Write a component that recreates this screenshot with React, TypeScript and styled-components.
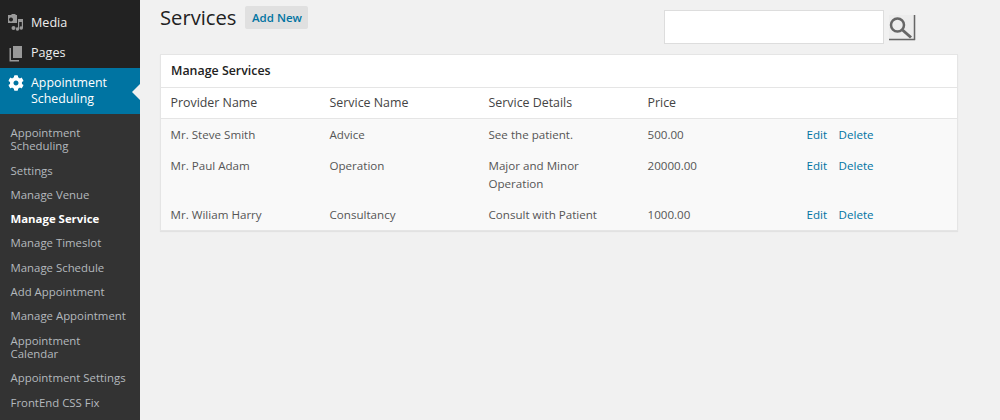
import React from "react";
import styled, { createGlobalStyle } from "styled-components";
import { FaCog } from "react-icons/fa";

const Global = createGlobalStyle`
  html, body { margin: 0; padding: 0; background: #f1f1f1; overflow: hidden; }
  body { font-family: "Open Sans", "Liberation Sans", sans-serif; }
  * { box-sizing: border-box; }
`;
const Page = styled.div`display: flex; width: 1000px; height: 420px; overflow: hidden; background: #f1f1f1;`;
const Sidebar = styled.nav`width: 140px; height: 420px; flex: none; background: #333; display: flex; flex-direction: column; overflow: hidden;`;
const TopMenu = styled.div`flex: none; background: #222; padding-top: 7px; display: flex; flex-direction: column;`;
const MenuItem = styled.div<{ $h: number }>`
  height: ${p => p.$h}px; display: flex; align-items: center; gap: 7px; padding-left: 7px;
  color: #eee; font-size: 12.6px; line-height: 18px;
`;
const IconBox = styled.span`width: 17px; height: 17px; flex: none; display: flex; align-items: center; justify-content: center; color: #999;`;
const Current = styled.div`
  flex: none; position: relative; height: 46px; background: #0074a2; color: #fff; display: flex; align-items: center; gap: 7px;
  padding-left: 7px; font-size: 12.4px; line-height: 16px;
  &::after {
    content: ""; position: absolute; right: 0; top: 16px; border: 8px solid transparent; border-right-color: #f1f1f1; border-left-width: 0;
  }
`;
const WhiteIcon = styled(IconBox)`color: #fff; align-self: flex-start; margin-top: 6px;`;
const Sub = styled.div`display: flex; flex-direction: column; padding: 12px 11px 0 10.5px;`;
const SubItem = styled.a<{ $active?: boolean }>`
  display: block; color: ${p => (p.$active ? "#fff" : "#b4b9be")}; font-weight: ${p => (p.$active ? 700 : 400)};
  font-size: 11.4px; line-height: 13.3px; margin-bottom: 11px;
`;
const Main = styled.main`flex: 1; padding: 0 42px 0 20px; min-width: 0;`;
const TitleRow = styled.div`display: flex; height: 54px; position: relative;`;
const Title = styled.h1`margin: 0; font-weight: 400; font-size: 20.2px; line-height: 34px; color: #222;`;
const AddNew = styled.a`
  margin: 6px 0 0 9px; height: 23px; width: 63px; display: flex; align-items: center; justify-content: center;
  background: #e0e0e0; color: #0074a2; font-weight: 600; font-size: 11.5px; border-radius: 2px;
`;
const Search = styled.div`margin-left: auto; margin-right: 42px; display: flex; gap: 5px; padding-top: 10px;`;
const SearchInput = styled.input`width: 220px; height: 34px; background: #fff; border: 1px solid #ddd; outline: none;`;
const SearchBtn = styled.button`width: 27px; height: 26px; margin-top: 5px; padding: 0; border: none; background: #ececec; display: block;`;
const Card = styled.section`background: #fff; border: 1px solid #e5e5e5; box-shadow: 0 1px 1px rgba(0,0,0,.06);`;
const CardTitle = styled.h3`margin: 0; height: 32px; padding: 0 10px; font-size: 12.4px; line-height: 32px; font-weight: 600; color: #222;`;
const Table = styled.table`width: 100%; border-collapse: collapse; table-layout: fixed; font-size: 11.6px; border-top: 1px solid #e5e5e5;`;
const Th = styled.th`
  text-align: left; font-weight: 400; font-size: 12.4px; color: #444; padding: 0 9.5px 2px; height: 31px; border-bottom: 1px solid #e5e5e5;
`;
const Td = styled.td`padding: 7px 9.5px 6px; line-height: 18px; color: #555; vertical-align: top; background: #f9f9f9;`;
const Actions = styled.div`display: flex; gap: 11.5px;`;
const Link = styled.a`color: #0074a2;`;

const rows = [
  ["Mr. Steve Smith", "Advice", "See the patient.", "500.00"],
  ["Mr. Paul Adam", "Operation", "Major and Minor Operation", "20000.00"],
  ["Mr. Wiliam Harry", "Consultancy", "Consult with Patient", "1000.00"],
];
const subs = ["Appointment Scheduling","Settings","Manage Venue","Manage Service","Manage Timeslot","Manage Schedule","Add Appointment","Manage Appointment","Appointment Calendar","Appointment Settings","FrontEnd CSS Fix"];

export default function App() {
  return (
    <Page>
      <Global />
      <Sidebar>
        <TopMenu>
          <MenuItem $h={31}>
            <IconBox>
              <svg width="17" height="17" viewBox="0 0 17 17" fill="#999">
                <path d="M1 1h3l1-1h3l1 1h1v8H1z M4 3.5a2 2 0 1 0 .01 0z" fillRule="evenodd" />
                <path d="M11 5h5v9a1.7 1.7 0 1 1-1.2-1.6V8h-2.6v7a1.7 1.7 0 1 1-1.2-1.6z" />
                <circle cx="6.5" cy="14" r="2" />
              </svg>
            </IconBox>
            Media
          </MenuItem>
          <MenuItem $h={30}>
            <IconBox>
              <svg width="17" height="17" viewBox="0 0 17 17" fill="#999">
                <path d="M6 1h9v12h-9z" />
                <path d="M4 3v12h8v1.5H2.5V3z" />
              </svg>
            </IconBox>
            Pages
          </MenuItem>
        </TopMenu>
        <Current>
          <WhiteIcon><FaCog size={16} /></WhiteIcon>
          <span>Appointment<br />Scheduling</span>
        </Current>
        <Sub>
          {subs.map(s => <SubItem key={s} $active={s === "Manage Service"}>{s}</SubItem>)}
        </Sub>
      </Sidebar>
      <Main>
        <TitleRow>
          <Title>Services</Title>
          <AddNew>Add New</AddNew>
          <Search>
            <SearchInput aria-label="Search" />
            <SearchBtn aria-label="Search">
              <svg width="27" height="26" viewBox="0 0 27 26" fill="none" stroke="#666">
                <circle cx="8.5" cy="10" r="6.5" strokeWidth="2.5" />
                <path d="M13.5 15l8.5 7.5" strokeWidth="3" />
                <path d="M0 24.5h26M25.5 0v25" strokeWidth="1.5" />
              </svg>
            </SearchBtn>
          </Search>
        </TitleRow>
        <Card>
          <CardTitle>Manage Services</CardTitle>
          <Table>
            <thead>
              <tr>
                <Th style={{ width: 159 }}>Provider Name</Th>
                <Th style={{ width: 159 }}>Service Name</Th>
                <Th style={{ width: 159 }}>Service Details</Th>
                <Th style={{ width: 159 }}>Price</Th>
                <Th />
              </tr>
            </thead>
            <tbody>
              {rows.map(r => (
                <tr key={r[0]}>
                  {r.map(c => <Td key={c}>{c}</Td>)}
                  <Td><Actions><Link>Edit</Link><Link>Delete</Link></Actions></Td>
                </tr>
              ))}
            </tbody>
          </Table>
        </Card>
      </Main>
    </Page>
  );
}
